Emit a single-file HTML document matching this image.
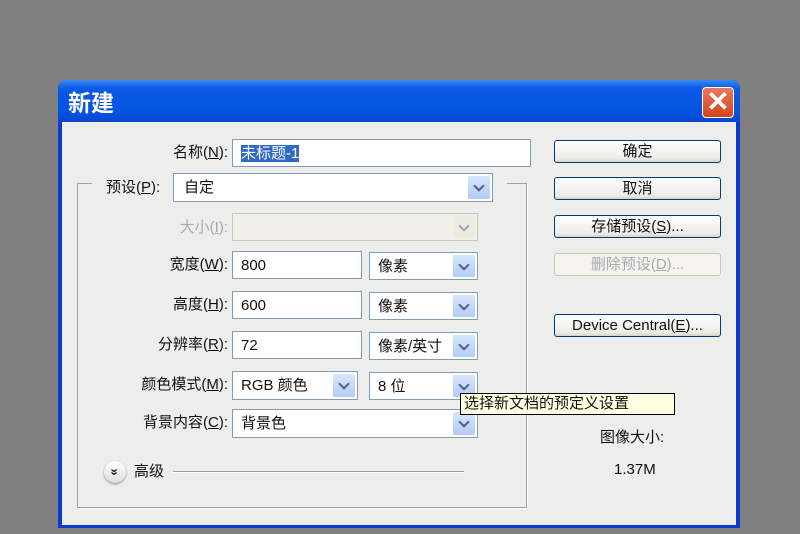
<!DOCTYPE html>
<html><head><meta charset="utf-8"><style>
body{margin:0;width:800px;height:534px;background:#808080;position:relative;overflow:hidden;font-family:"Liberation Sans","Noto Sans CJK SC",sans-serif;font-size:15px;color:#111}
.a{position:absolute}
.dlg{left:58px;top:80px;width:682px;height:448px;background:#0a3ccf;border-radius:8px 8px 0 0}
.title{left:58px;top:80px;width:682px;height:42px;border-radius:8px 8px 0 0;background:linear-gradient(#3b8af5,#0a5ae6 20%,#0552e0 80%,#0a45c8)}
.body{left:62px;top:122px;width:674px;height:403px;background:#ededeb}
.in{background:#fff;border:1px solid #7f9db9;box-sizing:border-box;padding-left:8px;line-height:27px;font-size:15px}
.arr{position:absolute;right:2px;top:2px;bottom:2px;width:22px;background:linear-gradient(#d9e6fb,#b4cbf5);border-radius:2px}
.arr:after{content:"";position:absolute;left:7px;top:6px;width:6px;height:6px;border-right:2px solid #4d6185;border-bottom:2px solid #4d6185;transform:rotate(45deg)}
.lab{text-align:right;width:200px;left:28px;font-size:15px;line-height:20px}
.btn{left:554px;width:167px;height:23px;border:1px solid #003c74;border-radius:3px;box-sizing:border-box;background:linear-gradient(#fff,#ecebe6 85%,#d6d0c5);text-align:center;line-height:21px;font-size:15px}
u{text-decoration:underline}
</style></head><body>
<div class="a dlg"></div>
<div class="a title"></div>
<div class="a" style="left:68px;top:88px;color:#fff;font-size:23px;font-weight:bold;line-height:30px">新建</div>
<div class="a" style="left:702px;top:87px;width:32px;height:31px;border:1px solid #fff;border-radius:4px;box-sizing:border-box;background:linear-gradient(#e8795e,#d3441b);color:#fff;font-size:28px;line-height:28px;text-align:center;font-weight:bold">✕</div>
<div class="a body"></div>
<div class="a" style="left:77px;top:183px;width:450px;height:325px;border:1px solid #a0a0a0;box-shadow:1px 1px 0 #fff;box-sizing:border-box"></div>
<div class="a" style="left:92px;top:178px;width:415px;height:12px;background:#ededeb"></div>

<div class="a lab" style="top:143px">名称(<u>N</u>):</div>
<div class="a in" style="left:232px;top:139px;width:299px;height:28px"><span style="background:#316ac5;color:#fff">未标题-1</span></div>

<div class="a" style="left:106px;top:178px;line-height:20px">预设(<u>P</u>):</div>
<div class="a in" style="left:173px;top:173px;width:320px;height:29px;padding-left:10px">自定<div class="arr"></div></div>

<div class="a lab" style="top:218px;color:#aaa">大小(<u>I</u>):</div>
<div class="a in" style="left:232px;top:213px;width:246px;height:28px;background:#f0efea;border-color:#c9c7ba"><div class="arr" style="background:#ece9d8;opacity:.5"></div></div>

<div class="a lab" style="top:255px">宽度(<u>W</u>):</div>
<div class="a in" style="left:232px;top:251px;width:130px;height:28px">800</div>
<div class="a in" style="left:369px;top:252px;width:109px;height:28px">像素<div class="arr"></div></div>

<div class="a lab" style="top:295px">高度(<u>H</u>):</div>
<div class="a in" style="left:232px;top:291px;width:130px;height:28px">600</div>
<div class="a in" style="left:369px;top:292px;width:109px;height:28px">像素<div class="arr"></div></div>

<div class="a lab" style="top:335px">分辨率(<u>R</u>):</div>
<div class="a in" style="left:232px;top:331px;width:130px;height:28px">72</div>
<div class="a in" style="left:369px;top:332px;width:109px;height:28px">像素/英寸<div class="arr"></div></div>

<div class="a lab" style="top:375px">颜色模式(<u>M</u>):</div>
<div class="a in" style="left:232px;top:371px;width:126px;height:29px">RGB 颜色<div class="arr"></div></div>
<div class="a in" style="left:369px;top:372px;width:109px;height:28px">8 位<div class="arr"></div></div>

<div class="a lab" style="top:413px">背景内容(<u>C</u>):</div>
<div class="a in" style="left:232px;top:409px;width:246px;height:29px">背景色<div class="arr"></div></div>

<div class="a" style="left:104px;top:461px;width:22px;height:22px;border-radius:50%;background:linear-gradient(#fff,#ddd);box-shadow:0 1px 2px #888;text-align:center;font-size:13px;line-height:22px;font-weight:bold"><span style="display:inline-block;transform:rotate(90deg)">»</span></div>
<div class="a" style="left:134px;top:462px;line-height:20px">高级</div>
<div class="a" style="left:173px;top:471px;width:291px;height:1px;background:#999;border-bottom:1px solid #fff"></div>

<div class="a btn" style="top:140px">确定</div>
<div class="a btn" style="top:177px">取消</div>
<div class="a btn" style="top:215px">存储预设(<u>S</u>)...</div>
<div class="a btn" style="top:253px;color:#aaa;border-color:#c9c7ba;background:#f4f3ee">删除预设(<u>D</u>)...</div>
<div class="a btn" style="top:314px">Device Central(<u>E</u>)...</div>

<div class="a" style="left:460px;top:393px;width:215px;height:22px;background:#ffffe1;border:1px solid #000;box-sizing:border-box;font-size:15px;line-height:20px;padding-left:3px">选择新文档的预定义设置</div>

<div class="a" style="left:600px;top:428px;line-height:20px">图像大小:</div>
<div class="a" style="left:614px;top:460px;line-height:20px">1.37M</div>
</body></html>
